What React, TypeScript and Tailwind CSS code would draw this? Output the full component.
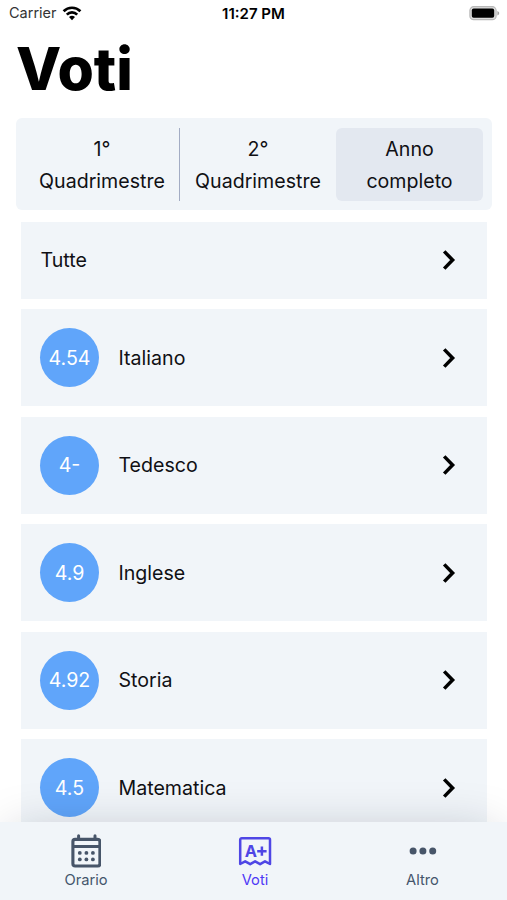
import React from "react";

const terms = [
  { label: ["1°", "Quadrimestre"], box: "w-[154px]" },
  { label: ["2°", "Quadrimestre"], box: "w-[156px]" },
  { label: ["Anno", "completo"], box: "w-[147px] rounded-[6px] bg-[#e3e8f0]" },
];

const subjects = [
  { name: "Italiano", grade: "4.54" },
  { name: "Tedesco", grade: "4-" },
  { name: "Inglese", grade: "4.9" },
  { name: "Storia", grade: "4.92" },
  { name: "Matematica", grade: "4.5" },
];

function Chevron() {
  return (
    <svg width="14" height="22" viewBox="0 0 14 22" fill="none" className="mr-[31px] shrink-0">
      <path d="M2.2 2.4L10.6 11l-8.4 8.6" stroke="#000" strokeWidth="3.5" />
    </svg>
  );
}

function WifiIcon() {
  return (
    <svg width="20" height="15" viewBox="0 0 20 15" fill="none" stroke="#000" strokeWidth="2.7">
      <path d="M1.6 5.2a12 12 0 0 1 16.8 0" />
      <path d="M4.8 8.6a7.4 7.4 0 0 1 10.4 0" />
      <path d="M10 14.2L7 11.1a4.3 4.3 0 0 1 6 0z" fill="#000" stroke="none" />
    </svg>
  );
}

function BatteryIcon() {
  return (
    <svg width="31" height="15" viewBox="0 0 31 15" className="-mt-[2px]">
      <rect x="0.9" y="0.7" width="26.2" height="13" rx="3.8" fill="#ddd" stroke="#b8b8b8" strokeWidth="1.2" />
      <rect x="2.8" y="2.6" width="22.4" height="9.2" rx="1.8" fill="#000" />
      <path d="M28.4 5c2.4.9 2.4 3.5 0 4.4z" fill="#a3a3a3" />
    </svg>
  );
}

function CalendarIcon() {
  return (
    <svg width="30" height="34" viewBox="0 0 30 34" fill="none" stroke="#475569">
      <rect x="1.9" y="5.4" width="27" height="26.6" rx="2.2" strokeWidth="3.1" />
      <path d="M2.4 12.5h26" strokeWidth="3" />
      <path d="M7.6 1.8v3M24 1.8v3" strokeWidth="3" strokeLinecap="round" />
      <g fill="#475569" stroke="none">
        <circle cx="8.8" cy="18.9" r="1.9" />
        <circle cx="15.4" cy="18.9" r="1.9" />
        <circle cx="21.9" cy="18.9" r="1.9" />
        <circle cx="8.8" cy="25.4" r="1.9" />
        <circle cx="15.4" cy="25.4" r="1.9" />
        <circle cx="21.9" cy="25.4" r="1.9" />
      </g>
    </svg>
  );
}

function GradesIcon() {
  return (
    <svg width="34" height="32" viewBox="0 0 34 32" fill="none">
      <path
        d="M2.2 28V3.8a1.5 1.5 0 0 1 1.5-1.5h26.8a1.5 1.5 0 0 1 1.5 1.5V28l-5-2.7-4.9 2.9-5-2.9-4.9 2.9-5-2.9z"
        stroke="#4f46e5"
        strokeWidth="2.5"
        strokeLinejoin="round"
      />
      <text x="6.8" y="20.8" fill="#4f46e5" fontFamily="Inter, sans-serif" fontSize="16.4" fontWeight="700">
        A
      </text>
      <path d="M19.2 15.2h9.4M23.9 10.6v9.2" stroke="#4f46e5" strokeWidth="2.5" />
    </svg>
  );
}

function MoreIcon() {
  return (
    <svg width="28" height="8" viewBox="0 0 28 8" fill="#475569">
      <circle cx="4.1" cy="4" r="3.5" />
      <circle cx="13.9" cy="4" r="3.5" />
      <circle cx="23.7" cy="4" r="3.5" />
    </svg>
  );
}

export default function App() {
  return (
    <div className="flex h-[900px] w-[507px] flex-col overflow-hidden bg-white font-['Inter',sans-serif] text-[19.6px] text-[#101014]">
      {/* Status bar */}
      <div className="grid h-7 shrink-0 grid-cols-3 items-center pr-[7px] pl-[9px] text-[14.5px] leading-none text-black">
        <div className="-mt-px flex items-center gap-[5px]">
          <span className="text-[#333]">Carrier</span>
          <WifiIcon />
        </div>
        <span className="-mt-px -ml-[2px] text-center text-[15px] font-semibold">11:27 PM</span>
        <div className="flex justify-end">
          <BatteryIcon />
        </div>
      </div>

      <h1 className="h-[90px] shrink-0 pt-[11px] pl-[16px] text-[58.8px] leading-[60px] font-extrabold text-black">
        Voti
      </h1>

      {/* Term selector */}
      <div className="ml-4 flex h-[92px] w-[476px] shrink-0 items-center rounded-[6px] bg-slate-100 pl-[9px]">
        {terms.map((term, i) => (
          <React.Fragment key={i}>
            {i === 1 && <div className="h-[73px] w-px bg-[#a3acc4]" />}
            <div className={`flex h-[73px] shrink-0 flex-col items-center justify-center pt-[2px] leading-8 ${term.box}`}>
              <span>{term.label[0]}</span>
              <span>{term.label[1]}</span>
            </div>
          </React.Fragment>
        ))}
      </div>

      {/* Subjects */}
      <div className="flex min-h-0 flex-1 flex-col gap-[10.5px] overflow-hidden pt-[11.5px] pr-5 pl-[21px]">
        <div className="flex h-[77px] shrink-0 items-center justify-between bg-slate-100 pl-[19.5px]">
          <span className="pt-[2px]">Tutte</span>
          <Chevron />
        </div>
        {subjects.map((subject) => (
          <div key={subject.name} className="flex h-[97px] shrink-0 items-center bg-slate-100 pl-[19px]">
            <div className="flex size-[59px] shrink-0 items-center justify-center rounded-full bg-[#60a5fa] pt-[2px] text-white">
              {subject.grade}
            </div>
            <span className="flex-1 pt-[2px] pl-[19.5px]">{subject.name}</span>
            <Chevron />
          </div>
        ))}
      </div>

      {/* Tab bar */}
      <nav className="relative flex h-[78px] shrink-0 justify-between bg-slate-100 px-[2px] text-[14.7px] leading-5 text-slate-600 shadow-[0_0_50px_-12px_rgba(15,23,42,0.25)]">
        <div className="flex w-[168px] flex-col items-center pt-3">
          <CalendarIcon />
          <span className="mt-[2px]">Orario</span>
        </div>
        <div className="flex w-[170px] flex-col items-center pt-[14px] text-indigo-600">
          <GradesIcon />
          <span className="mt-[2px]">Voti</span>
        </div>
        <div className="flex w-[165px] flex-col items-center pt-[25px]">
          <MoreIcon />
          <span className="mt-[15px]">Altro</span>
        </div>
      </nav>
    </div>
  );
}
